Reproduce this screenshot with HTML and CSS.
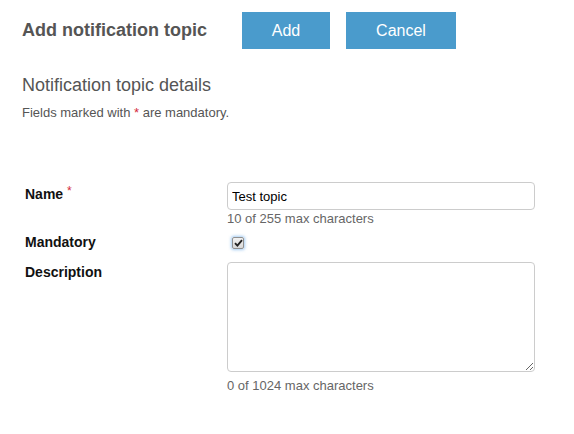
FILE: index.html
```html
<!DOCTYPE html>
<html lang="en">
<head>
<meta charset="utf-8">
<title>Add notification topic</title>
<link rel="stylesheet" href="styles.css">
</head>
<body>
<div class="page">
  <header class="header">
    <h1 class="title">Add notification topic</h1>
    <div class="actions">
      <button class="btn btn-add" type="button">Add</button>
      <button class="btn btn-cancel" type="button">Cancel</button>
    </div>
  </header>

  <h2 class="section-title">Notification topic details</h2>
  <p class="note">Fields marked with <span class="req">*</span> are mandatory.</p>

  <form class="form">
    <div class="row">
      <label class="label label-name" for="name">Name <span class="req req-label">*</span></label>
      <div class="field">
        <input class="text-input" id="name" type="text" value="Test topic">
        <div class="help help-input">10 of 255 max characters</div>
      </div>
    </div>
    <div class="row row-mandatory">
      <label class="label">Mandatory</label>
      <div class="field">
        <span class="checkbox" role="checkbox" aria-checked="true">
          <svg width="9" height="8" viewBox="0 0 9 8"><path d="M1 4.2 L3.4 6.6 L8 1.2" fill="none" stroke="#222" stroke-width="1.9"/></svg>
        </span>
      </div>
    </div>
    <div class="row row-description">
      <label class="label" for="desc">Description</label>
      <div class="field">
        <textarea class="textarea" id="desc"></textarea>
        <div class="help help-textarea">0 of 1024 max characters</div>
      </div>
    </div>
  </form>
</div>
</body>
</html>
```

FILE: styles.css
```css
* {
  box-sizing: border-box;
}

html, body {
  margin: 0;
  padding: 0;
  background: #ffffff;
}

body {
  font-family: "Liberation Sans", Arial, sans-serif;
  color: #555555;
}

.page {
  padding: 12px 0 0 22px;
}

.header {
  display: flex;
  align-items: center;
}

.title {
  margin: 0;
  width: 220px;
  font-size: 18px;
  font-weight: bold;
  color: #555555;
  line-height: 22px;
  padding-bottom: 1px;
}

.actions {
  display: flex;
  gap: 16px;
}

.btn {
  height: 37px;
  border: 0;
  border-radius: 0;
  background: #4a9bcc;
  color: #ffffff;
  font-family: "Liberation Sans", Arial, sans-serif;
  font-size: 16px;
  padding: 0;
  cursor: pointer;
}

.btn-add {
  width: 88px;
}

.btn-cancel {
  width: 110px;
}

.section-title {
  margin: 25px 0 0 0;
  font-size: 18px;
  font-weight: normal;
  line-height: 22px;
  color: #555555;
}

.note {
  margin: 9px 0 0 0;
  font-size: 13px;
  line-height: 16px;
  color: #555555;
}

.req {
  color: #d42a3a;
}

.form {
  margin: 61px 0 0 3px;
}

.row {
  display: grid;
  grid-template-columns: 202px 308px;
}

.label {
  font-size: 14px;
  font-weight: bold;
  line-height: 20px;
  color: #111111;
}

.label-name {
  padding-top: 2px;
}

.req-label {
  font-size: 12px;
  font-weight: normal;
  position: relative;
  top: -4px;
}

.text-input {
  display: block;
  width: 308px;
  height: 28px;
  border: 1px solid #cccccc;
  border-radius: 4px;
  padding: 0 4px;
  font-family: "Liberation Sans", Arial, sans-serif;
  font-size: 13px;
  color: #000000;
  background: #ffffff;
  outline: none;
}

.help {
  font-size: 13px;
  line-height: 16px;
  color: #666666;
}

.help-input {
  margin-top: 1px;
}

.row-mandatory {
  margin-top: 5px;
}

.checkbox {
  display: flex;
  align-items: center;
  justify-content: center;
  width: 12px;
  height: 12px;
  margin: 5px 0 3px 5px;
  border: 1px solid #8f8f8f;
  border-radius: 2px;
  background: linear-gradient(#f2f2f2, #d8d8d8);
  box-shadow: 0 0 3px 1px rgba(90, 160, 230, 0.55);
}

.row-description {
  margin-top: 10px;
}

.textarea {
  display: block;
  width: 308px;
  height: 110px;
  margin: 0;
  border: 1px solid #cccccc;
  border-radius: 4px;
  padding: 4px;
  font-family: "Liberation Sans", Arial, sans-serif;
  font-size: 13px;
  resize: both;
  outline: none;
}

.help-textarea {
  margin-top: 6px;
}
```
